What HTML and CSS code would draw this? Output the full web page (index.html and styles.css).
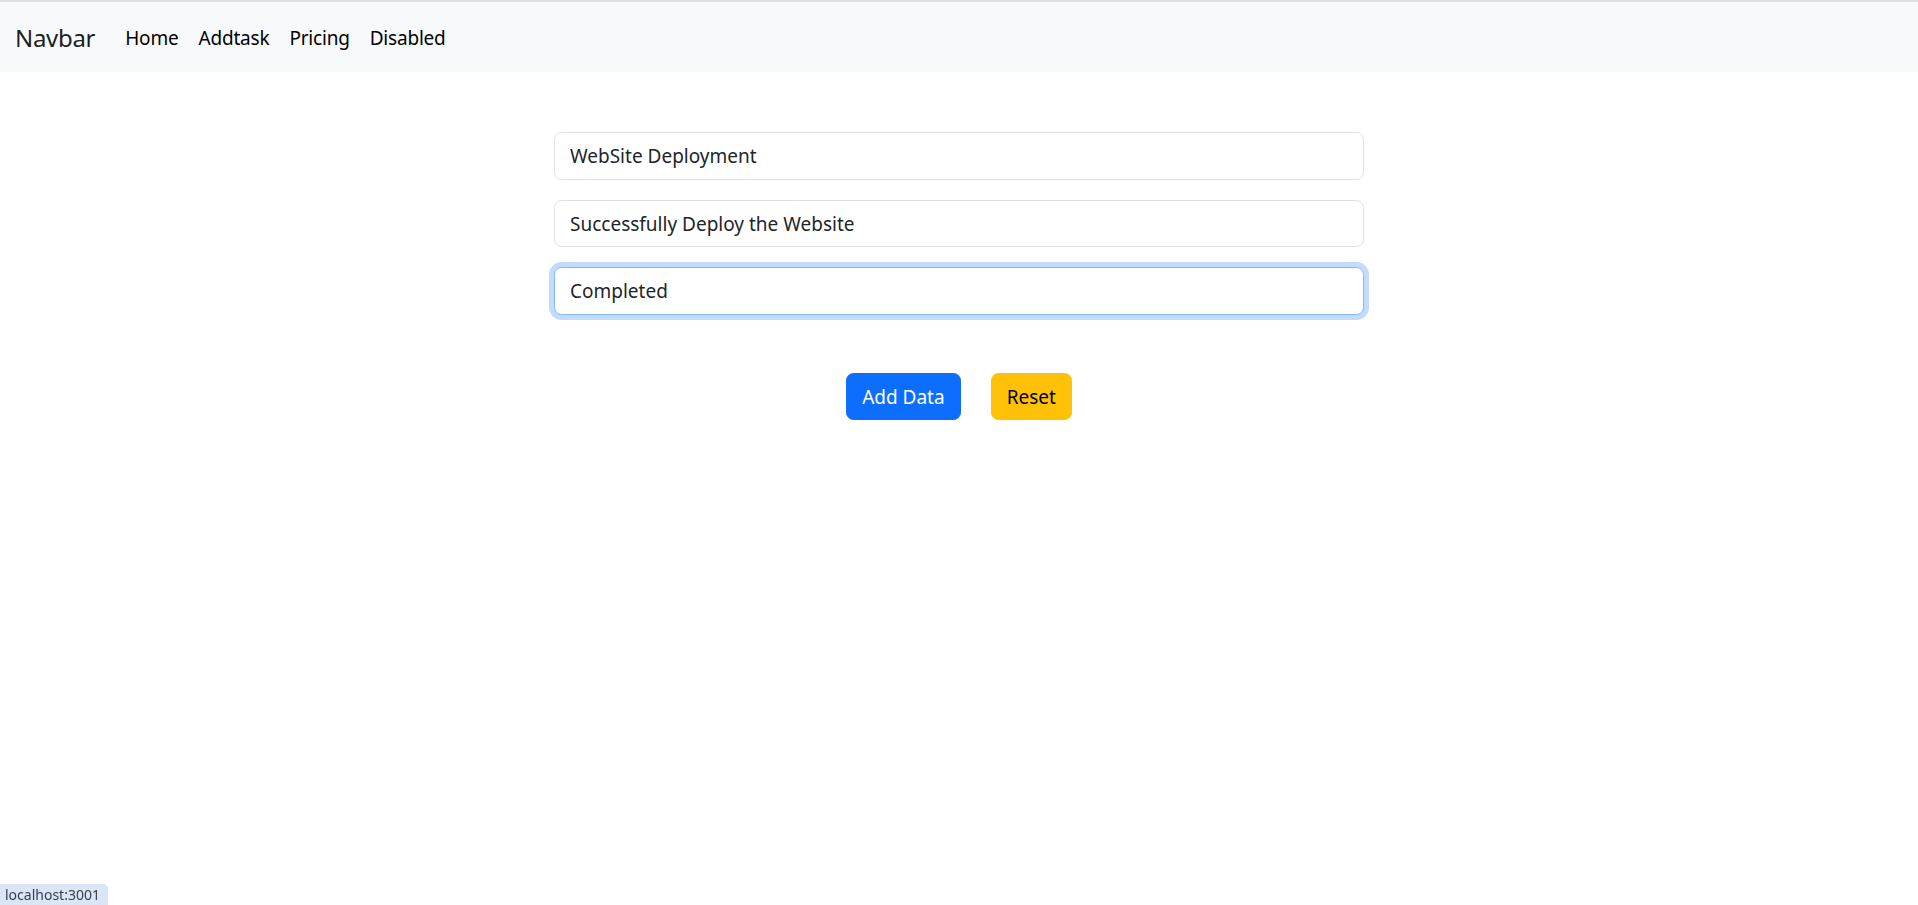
FILE: index.html
```html
<!DOCTYPE html>
<html lang="en">
<head>
<meta charset="utf-8">
<title>Navbar</title>
<link rel="stylesheet" href="styles.css">
</head>
<body>
<nav class="navbar">
  <a class="brand" href="#">Navbar</a>
  <ul class="nav">
    <li><a class="nav-link" href="#">Home</a></li>
    <li><a class="nav-link" href="#">Addtask</a></li>
    <li><a class="nav-link" href="#">Pricing</a></li>
    <li><a class="nav-link" href="#">Disabled</a></li>
  </ul>
</nav>
<main class="main">
  <form class="task-form">
    <input class="form-control" type="text" value="WebSite Deployment">
    <input class="form-control" type="text" value="Successfully Deploy the Website">
    <input class="form-control focused" type="text" value="Completed">
    <div class="actions">
      <button type="button" class="btn btn-primary">Add Data</button>
      <button type="button" class="btn btn-warning">Reset</button>
    </div>
  </form>
</main>
<div class="status">localhost:3001</div>
</body>
</html>
```
FILE: styles.css
```css
* { box-sizing: border-box; }
html, body { margin: 0; padding: 0; }
body {
  font-family: "Noto Sans", "Open Sans", sans-serif;
  color: #212529;
  background: #fff;
  border-top: 2px solid #dfe1e3;
  height: 905px;
  overflow: hidden;
}
.navbar {
  display: flex;
  align-items: center;
  height: 70px;
  background: #f8f9fa;
  padding: 1px 15px 0;
}
.brand {
  font-size: 24px;
  color: rgba(0,0,0,0.9);
  text-decoration: none;
  margin-right: 20px;
  letter-spacing: -0.3px;
}
.nav {
  display: flex;
  list-style: none;
  margin: 0;
  padding: 0;
}
.nav-link {
  display: block;
  font-size: 19px;
  color: #000;
  text-decoration: none;
  padding: 10px 10px;
  letter-spacing: -0.2px;
}
.main {
  display: flex;
  justify-content: center;
  padding-top: 60px;
}
.task-form {
  width: 810px;
  display: flex;
  flex-direction: column;
  gap: 20px;
}
.form-control {
  display: block;
  width: 100%;
  height: 47.5px;
  padding: 1px 15px 0;
  font-family: inherit;
  font-size: 19px;
  color: #212529;
  background: #fff;
  border: 1.25px solid #dee2e6;
  border-radius: 7.5px;
  outline: none;
}
.form-control.focused {
  border-color: #86b7fe;
  box-shadow: 0 0 0 5px rgba(13,110,253,0.25);
}
.actions {
  display: flex;
  justify-content: center;
  gap: 30px;
  margin-top: 38px;
}
.btn {
  height: 47.5px;
  padding: 1px 15px 0;
  font-family: inherit;
  font-size: 19px;
  border: 1.25px solid transparent;
  border-radius: 7.5px;
  cursor: pointer;
}
.btn-primary { background: #0d6efd; border-color: #0d6efd; color: #fff; }
.btn-warning { background: #ffc107; border-color: #ffc107; color: #000; }
.status {
  position: fixed;
  left: 0;
  bottom: 0;
  height: 21px;
  padding: 1px 8px 0 5px;
  background: #dae5f8;
  color: #3c4043;
  font-size: 14px;
  border-top-right-radius: 5px;
}
```
